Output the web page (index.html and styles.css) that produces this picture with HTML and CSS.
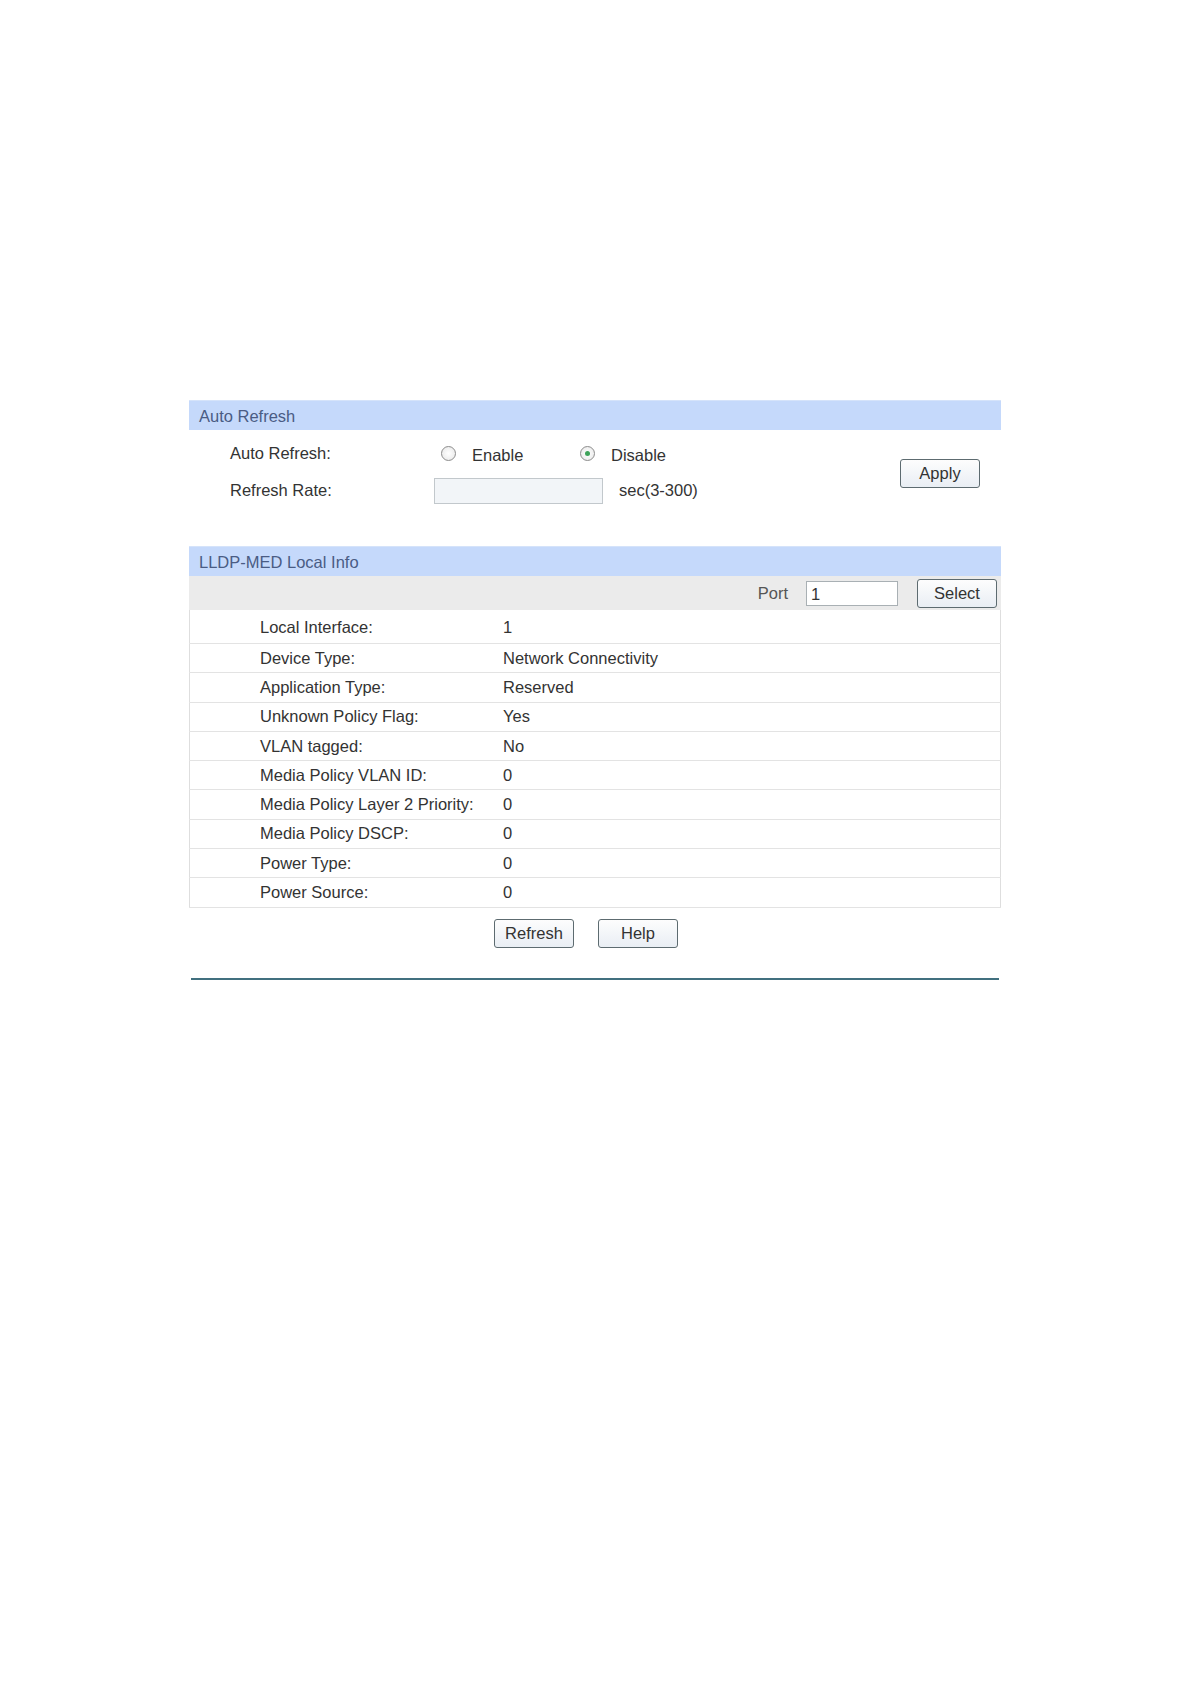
FILE: index.html
```html
<!doctype html>
<html>
<head>
<meta charset="utf-8">
<title>LLDP-MED Local Info</title>
<link rel="stylesheet" href="styles.css">
</head>
<body>

	<div class="page">

		<!-- Auto Refresh -->
		<div class="bar">Auto Refresh</div>
		<div class="refresh-box">
			<div class="refresh-rows">
				<div class="row">
					<span class="lbl">Auto Refresh:</span>
					<span class="radio"></span><span class="opt">Enable</span>
					<span class="radio checked"></span><span class="opt">Disable</span>
				</div>
				<div class="row">
					<span class="lbl">Refresh Rate:</span>
					<span class="rate-input"></span>
					<span class="unit">sec(3-300)</span>
				</div>
			</div>
			<button class="btn apply">Apply</button>
		</div>

		<!-- LLDP-MED Local Info -->
		<div class="bar">LLDP-MED Local Info</div>
		<div class="toolbar">
			<span class="port-lbl">Port</span>
			<span class="port-input">1</span>
			<button class="btn select">Select</button>
		</div>
		<table class="info-table">
			<tr class="first"><td class="k">Local Interface:</td><td>1</td></tr>
			<tr><td class="k">Device Type:</td><td>Network Connectivity</td></tr>
			<tr><td class="k">Application Type:</td><td>Reserved</td></tr>
			<tr><td class="k">Unknown Policy Flag:</td><td>Yes</td></tr>
			<tr><td class="k">VLAN tagged:</td><td>No</td></tr>
			<tr><td class="k">Media Policy VLAN ID:</td><td>0</td></tr>
			<tr><td class="k">Media Policy Layer 2 Priority:</td><td>0</td></tr>
			<tr><td class="k">Media Policy DSCP:</td><td>0</td></tr>
			<tr><td class="k">Power Type:</td><td>0</td></tr>
			<tr><td class="k">Power Source:</td><td>0</td></tr>
		</table>

		<div class="actions">
			<button class="btn">Refresh</button>
			<button class="btn">Help</button>
		</div>

		<div class="rule"></div>
	</div>

</body>
</html>
```

FILE: styles.css
```css
/*Page*/
body{
	margin: 0;
	background: #fff;
	font-family: "Liberation Sans", Arial, sans-serif;
	font-size: 16.5px;
	color: #333;
}

.page{
	width: 812px;
	margin: 400px 0 0 189px;
}

/*Section title bar*/
.bar{
	height: 30px;
	line-height: 31px;
	padding-left: 10px;
	background: #c5d9fb;
	border-top: 1px solid #d5e3fa;
	color: #4a5c84;
	box-sizing: border-box;
}

/*---------------------------------------------*/
/*Auto refresh*/
.refresh-box{
	display: flex;
	align-items: center;
	padding: 5px 21px 0 41px;
	margin-bottom: 37px;
}
.refresh-rows{
	flex: 1;
}
.row{
	display: flex;
	align-items: center;
	height: 37px;
}
.lbl{
	width: 204px;
}
.radio{
	width: 15px;
	height: 15px;
	margin-left: 7px;
	border: 1px solid #8c8c8c;
	border-radius: 50%;
	background: radial-gradient(#ffffff, #e6e6e6);
	box-sizing: border-box;
	position: relative;
	top: 0;
}
.radio.checked::after{
	content: "";
	position: absolute;
	left: 4px;
	top: 4px;
	width: 5px;
	height: 5px;
	border-radius: 50%;
	background: #3ea35a;
}
.opt{
	margin-left: 16px;
	width: 101px;
	position: relative;
	top: 2px;
}
.rate-input{
	width: 169px;
	height: 26px;
	border: 1px solid #c2c8cc;
	background: #f2f5f8;
	box-sizing: border-box;
}
.unit{
	margin-left: 16px;
}

/*Buttons*/
.btn{
	width: 80px;
	height: 29px;
	padding: 0;
	border: 1px solid #5d6b70;
	border-radius: 3px;
	background: linear-gradient(#fdfdfd, #e9eef4);
	font-family: "Liberation Sans", Arial, sans-serif;
	font-size: 16.5px;
	color: #333;
}
.apply{
	margin-top: 2px;
}

/*---------------------------------------------*/
/*Local info*/
.toolbar{
	display: flex;
	align-items: center;
	justify-content: flex-end;
	height: 34px;
	padding-right: 4px;
	background: #ebebeb;
}
.port-lbl{
	color: #555;
	margin-right: 18px;
}
.port-input{
	width: 92px;
	height: 25px;
	line-height: 24px;
	padding-left: 4px;
	border: 1px solid #a9b0b4;
	background: #fff;
	box-sizing: border-box;
	margin-right: 19px;
}

.info-table{
	width: 100%;
	table-layout: fixed;
	border-collapse: collapse;
	border-left: 1px solid #dedede;
	border-right: 1px solid #dedede;
}
.info-table td{
	height: 28.3px;
	padding: 0;
	border-bottom: 1px solid #e3e3e3;
	white-space: nowrap;
}
.info-table tr.first td{
	height: 31px;
	padding-top: 2px;
}
.info-table td.k{
	width: 243px;
	padding-left: 70px;
}

.actions{
	display: flex;
	gap: 24px;
	padding: 11px 0 0 305px;
}

.rule{
	height: 2px;
	margin: 30px 0 0 2px;
	width: 808px;
	background: #41707f;
}
```
